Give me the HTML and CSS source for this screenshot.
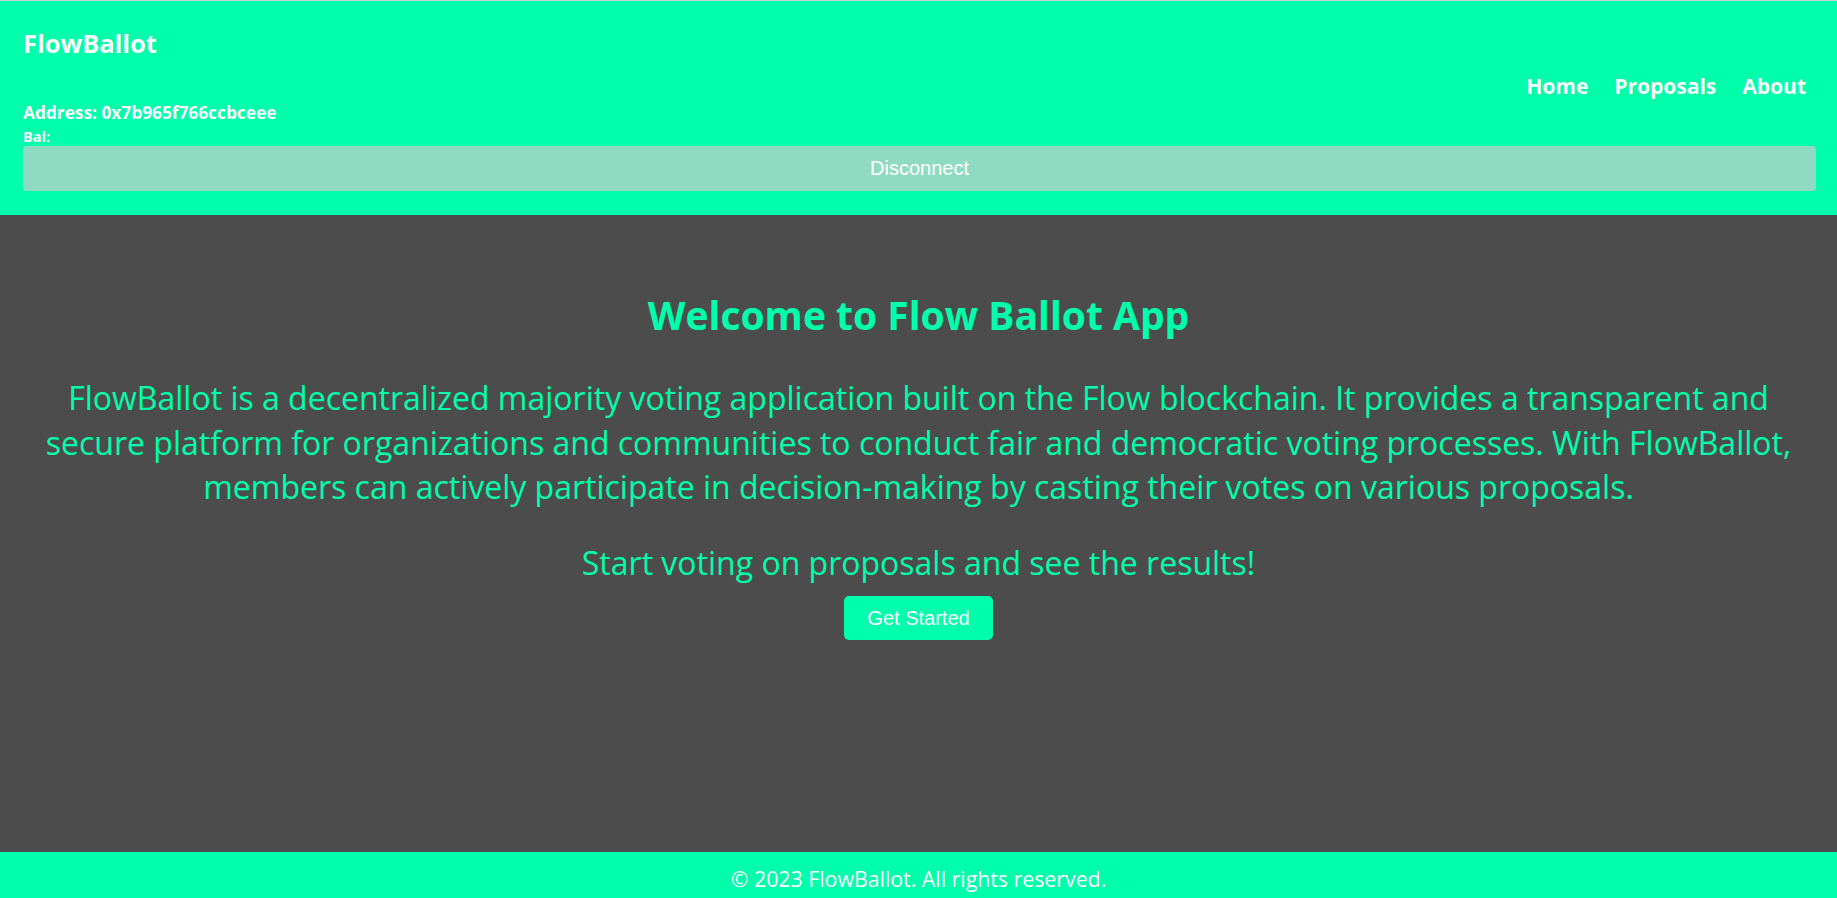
FILE: index.html
```html
<!DOCTYPE html>
<html lang="en">
<head>
  <meta charset="utf-8">
  <meta name="viewport" content="width=device-width, initial-scale=1.0">
  <title>FlowBallot</title>
  <link rel="stylesheet" href="styles.css">
</head>

<body>
  <header class="header">
    <div class="header-row">
      <div class="account">
        <h1 class="brand">FlowBallot</h1>
        <p class="address">Address: 0x7b965f766ccbceee</p>
        <p class="balance">Bal:</p>
      </div>
      <nav class="nav">
        <a href="#">Home</a>
        <a href="#">Proposals</a>
        <a href="#">About</a>
      </nav>
    </div>
    <button class="disconnect">Disconnect</button>
  </header>

  <main class="main">
    <h2 class="welcome">Welcome to Flow Ballot App</h2>
    <p class="intro">FlowBallot is a decentralized majority voting application built on the Flow blockchain. It provides a transparent and secure platform for organizations and communities to conduct fair and democratic voting processes. With FlowBallot, members can actively participate in decision-making by casting their votes on various proposals.</p>
    <p class="cta">Start voting on proposals and see the results!</p>
    <button class="start">Get Started</button>
  </main>

  <footer class="footer">
    <p>&copy; 2023 FlowBallot. All rights reserved.</p>
  </footer>
</body>
</html>
```

FILE: styles.css
```css
:root {
  font-family: "Open Sans", "Noto Sans", sans-serif;
  color: #fff;
}

body {
  margin: 0;
  padding: 0;
  min-height: 100vh;
  box-sizing: border-box;
  border-top: 1px solid #d2d2d2;
  display: flex;
  flex-direction: column;
  background: #4c4c4c;
}

p {
  margin: 0;
}

/* header */

.header {
  padding: 25px 21px 24px 23px;
  background: #00ffaa;
}

.header-row {
  display: flex;
  justify-content: space-between;
  align-items: center;
}

.brand {
  margin: 0;
  font-size: 25.4px;
  line-height: 34px;
  font-weight: bold;
}

.address {
  margin-top: 42px;
  font-size: 17.3px;
  line-height: 22px;
  font-weight: bold;
}

.balance {
  margin-top: 4px;
  font-size: 14.5px;
  line-height: 18px;
  font-weight: bold;
}

.nav {
  display: flex;
}

.nav a {
  padding: 0 13px;
  color: #fff;
  text-decoration: none;
  font-size: 21px;
  line-height: 28px;
  font-weight: bold;
}

.nav a:last-child {
  padding-right: 10px;
}

.disconnect {
  display: block;
  width: 100%;
  padding: 11px 0;
  border: none;
  border-radius: 4px;
  background: #8fdbc1;
  color: #fff;
  font-family: "Liberation Sans", Arial, sans-serif;
  font-size: 20px;
  line-height: 23px;
}

/* main */

.main {
  flex: 1;
  padding: 74px 30px 0 30px;
  text-align: center;
  color: #00ffaa;
}

.welcome {
  margin: 0 0 35px 0;
  font-size: 39px;
  line-height: 52px;
  font-weight: bold;
}

.intro {
  margin-bottom: 31px;
  font-size: 32px;
  line-height: 44.5px;
}

.cta {
  margin-bottom: 11px;
  font-size: 32px;
  line-height: 44.5px;
}

.start {
  padding: 10px 23px;
  border: none;
  border-radius: 5px;
  background: #00ffaa;
  color: #fff;
  font-family: "Liberation Sans", Arial, sans-serif;
  font-size: 20px;
  line-height: 24px;
}

/* footer */

.footer {
  padding: 12px 0 5px 0;
  background: #00ffaa;
  text-align: center;
  font-size: 21.3px;
  line-height: 29px;
}
```
